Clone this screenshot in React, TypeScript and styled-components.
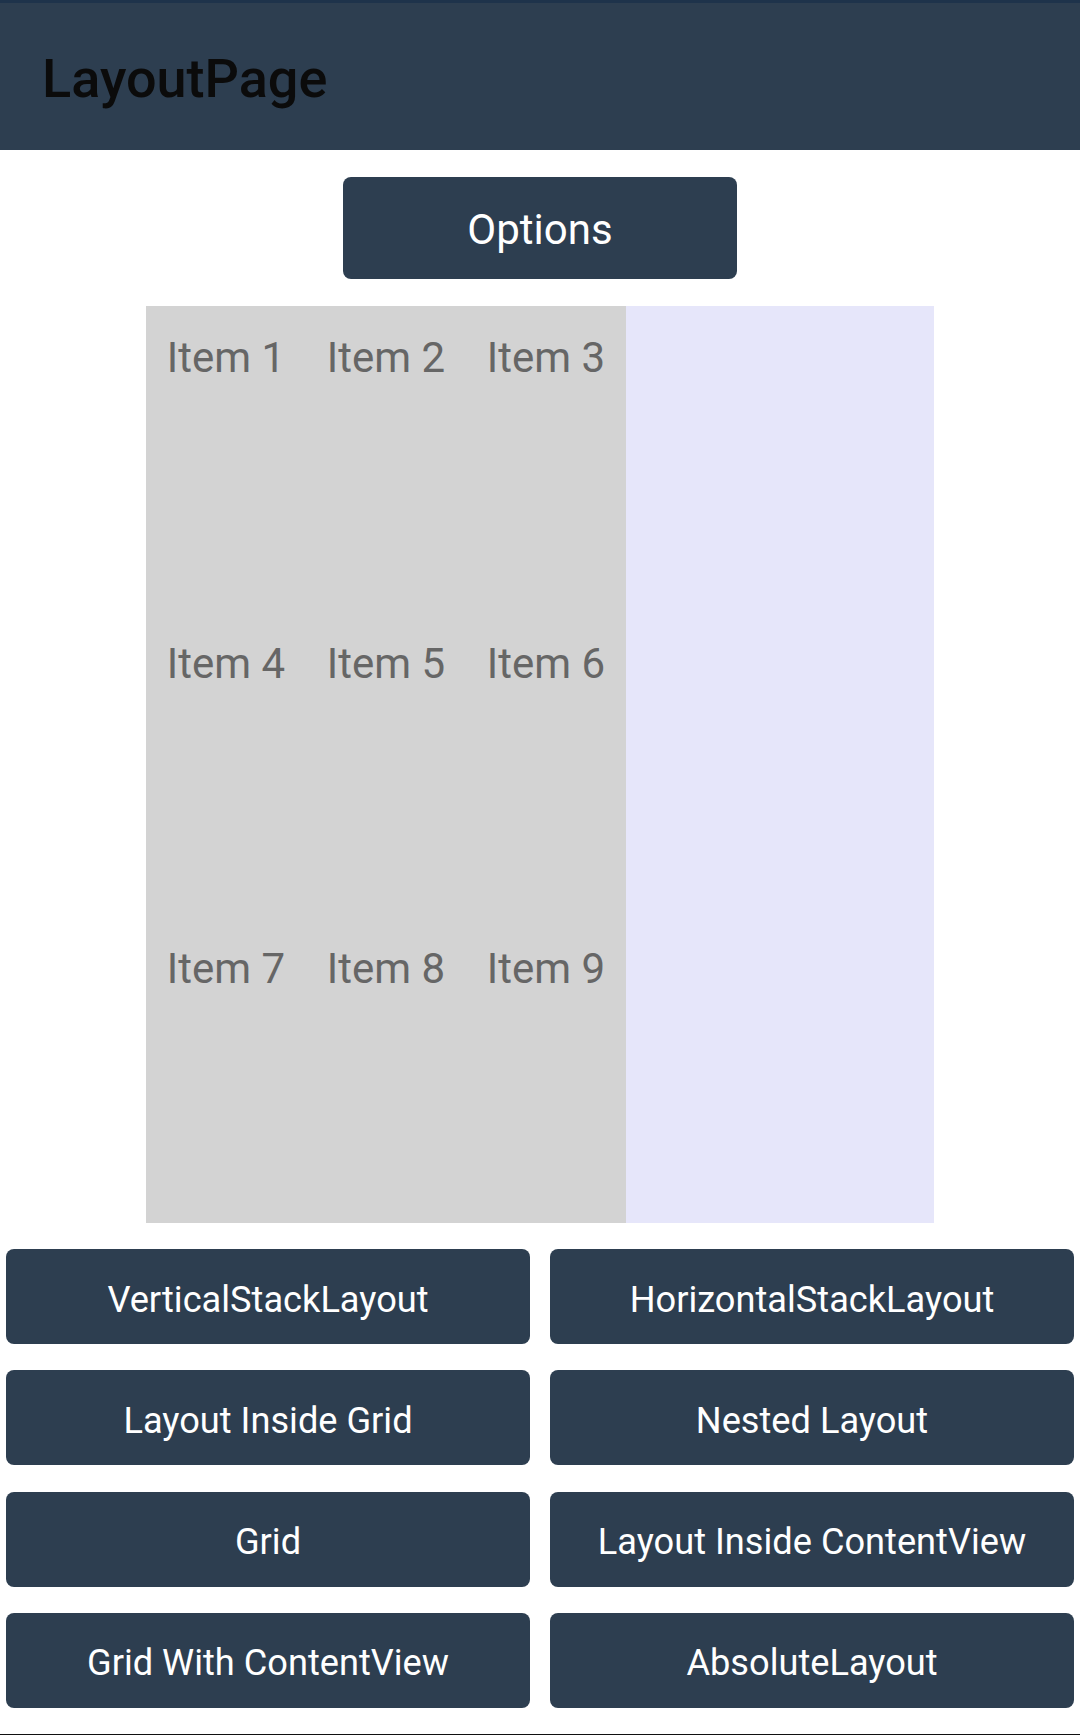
import * as React from "react"
import styled, { createGlobalStyle } from "styled-components"

const GlobalStyle = createGlobalStyle`
  html, body {
    margin: 0;
    padding: 0;
    background: #ffffff;
    font-family: Roboto, "Noto Sans", "Liberation Sans", sans-serif;
  }
`

const items = ["Item 1", "Item 2", "Item 3", "Item 4", "Item 5", "Item 6", "Item 7", "Item 8", "Item 9"]

const layouts = [
  "VerticalStackLayout",
  "HorizontalStackLayout",
  "Layout Inside Grid",
  "Nested Layout",
  "Grid",
  "Layout Inside ContentView",
  "Grid With ContentView",
  "AbsoluteLayout",
]

export default function App() {
  return (
    <Page>
      <GlobalStyle />
      <Header>
        <Title>LayoutPage</Title>
      </Header>

      <OptionsButton>Options</OptionsButton>

      <Board>
        <ItemGrid>
          {items.map((label) => (
            <Cell key={label}>{label}</Cell>
          ))}
        </ItemGrid>
        <Side />
      </Board>

      <ButtonGrid>
        {layouts.map((label) => (
          <NavButton key={label}>{label}</NavButton>
        ))}
      </ButtonGrid>

      <BottomLine />
    </Page>
  )
}

const Page = styled.div`
  display: flex;
  flex-direction: column;
  align-items: center;
  height: 1735px;
  width: 1080px;
  overflow: hidden;
`

const Header = styled.header`
  box-sizing: border-box;
  width: 100%;
  height: 150px;
  background: #2d3e50;
  border-top: 3px solid #1e334b;
  display: flex;
  align-items: center;
  padding: 0 0 0 42px;
`

const Title = styled.h1`
  margin: 0;
  font-size: 54px;
  font-weight: 500;
  color: #0b0b0b;
  line-height: 1;
  padding-top: 5px;
`

const OptionsButton = styled.button`
  margin-top: 27px;
  width: 394px;
  height: 102px;
  border: none;
  border-radius: 8px;
  background: #2d3e50;
  color: #ffffff;
  font-family: Roboto, "Noto Sans", sans-serif;
  font-size: 42px;
  padding: 2px 0 0;
`

const Board = styled.div`
  margin-top: 27px;
  width: 788px;
  height: 917px;
  display: flex;
`

const ItemGrid = styled.div`
  width: 480px;
  background: #d3d3d3;
  display: grid;
  grid-template-columns: repeat(3, 1fr);
  grid-template-rows: repeat(3, 1fr);
`

const Cell = styled.div`
  display: flex;
  justify-content: center;
  align-items: flex-start;
  padding-top: 27px;
  font-size: 42px;
  color: #666666;
`

const Side = styled.div`
  flex: 1;
  background: #e6e6fa;
`

const ButtonGrid = styled.div`
  margin-top: 26px;
  box-sizing: border-box;
  width: 100%;
  padding: 0 6px;
  display: grid;
  grid-template-columns: 1fr 1fr;
  grid-auto-rows: 95px;
  column-gap: 20px;
  row-gap: 26.3px;
`

const NavButton = styled.button`
  border: none;
  border-radius: 8px;
  background: #2d3e50;
  color: #ffffff;
  font-family: Roboto, "Noto Sans", sans-serif;
  font-size: 36.2px;
  padding: 5px 0 0;
`

const BottomLine = styled.div`
  margin-top: auto;
  width: 100%;
  height: 1px;
  background: #111111;
`
